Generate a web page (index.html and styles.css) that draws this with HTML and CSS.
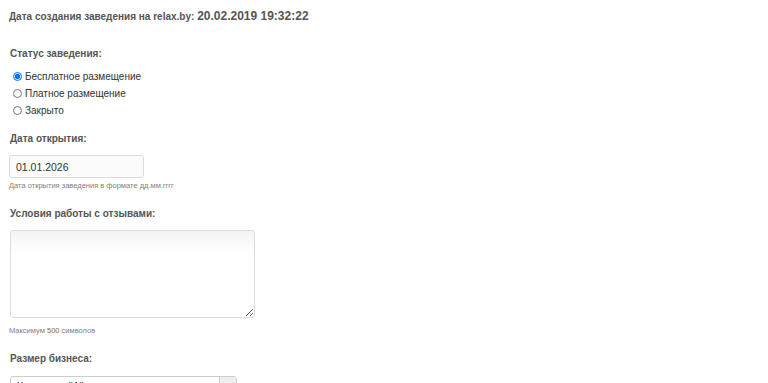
FILE: index.html
```html
<!DOCTYPE html>
<html lang="ru">
<head>
<meta charset="utf-8">
<link rel="stylesheet" href="styles.css">
</head>
<body>
<div class="page">
  <div class="created">Дата создания заведения на relax.by: <span class="created-date">20.02.2019 19:32:22</span></div>

  <div class="field field-status">
    <div class="label label-status">Статус заведения:</div>
    <div class="radios">
      <label class="radio"><input type="radio" name="st" checked> Бесплатное размещение</label>
      <label class="radio"><input type="radio" name="st"> Платное размещение</label>
      <label class="radio"><input type="radio" name="st"> Закрыто</label>
    </div>
  </div>

  <div class="field field-date">
    <div class="label">Дата открытия:</div>
    <input class="text-input" type="text" value="01.01.2026">
    <div class="help help-date">Дата открытия заведения в формате дд.мм.гггг</div>
  </div>

  <div class="field field-reviews">
    <div class="label">Условия работы с отзывами:</div>
    <textarea class="textarea"></textarea>
    <div class="help help-max">Максимум <span class="num">500</span> символов</div>
  </div>

  <div class="field field-size">
    <div class="label label-size">Размер бизнеса:</div>
    <div class="select">
      <span class="select-text">Категория "A"</span>
      <span class="select-btn"></span>
    </div>
  </div>
</div>
</body>
</html>
```

FILE: styles.css
```css
html, body {
  margin: 0;
  padding: 0;
  background: #fff;
  overflow: hidden;
}
body {
  font-family: "Liberation Sans", Arial, sans-serif;
  color: #555;
}
.page {
  padding: 9px 9px 0 9px;
}
.created {
  font-size: 10px;
  font-weight: bold;
  line-height: 14px;
}
.created-date {
  font-size: 12px;
}
.field-status {
  margin-top: 23px;
}
.field-date {
  margin-top: 13px;
}
.field-reviews {
  margin-top: 16px;
}
.field-size {
  margin-top: 16px;
}
.label {
  font-size: 10px;
  font-weight: bold;
  line-height: 14px;
  margin-bottom: 9px;
  padding-left: 1px;
}
.label-status {
  margin-bottom: 7px;
}
.label-size {
  margin-bottom: 10px;
}
.radios {
  display: flex;
  flex-direction: column;
  padding-left: 4px;
}
.radio {
  font-size: 10px;
  line-height: 17px;
  height: 17px;
  color: #333;
  display: flex;
  align-items: center;
  gap: 3px;
}
.radio input {
  margin: 0;
  width: 9px;
  height: 9px;
}
.text-input {
  display: block;
  box-sizing: border-box;
  width: 135px;
  height: 23px;
  border: 1px solid #ddd;
  border-radius: 3px;
  background: #fbfbfb;
  font-family: inherit;
  font-size: 10.5px;
  color: #333;
  padding: 0 6px;
  margin: 0;
}
.help {
  font-size: 7.5px;
  color: #808080;
  line-height: 10px;
}
.help-date {
  margin-top: 3px;
}
.help-max {
  margin-top: 8px;
}
.num {
  color: #8a6d3b;
}
.textarea {
  display: block;
  box-sizing: border-box;
  width: 245px;
  height: 88px;
  border: 1px solid #ddd;
  border-radius: 3px;
  background: linear-gradient(#f3f3f3, #fff 22px);
  margin: 0 0 0 1px;
  resize: both;
}
.select {
  display: flex;
  box-sizing: border-box;
  width: 227px;
  height: 24px;
  margin-left: 1px;
  border: 1px solid #ccc;
  border-radius: 3px;
  font-size: 10.5px;
  color: #333;
}
.select-text {
  flex: 1;
  padding: 3px 6px;
}
.select-btn {
  width: 16px;
  border-left: 1px solid #ccc;
  background: #eee;
}
```
